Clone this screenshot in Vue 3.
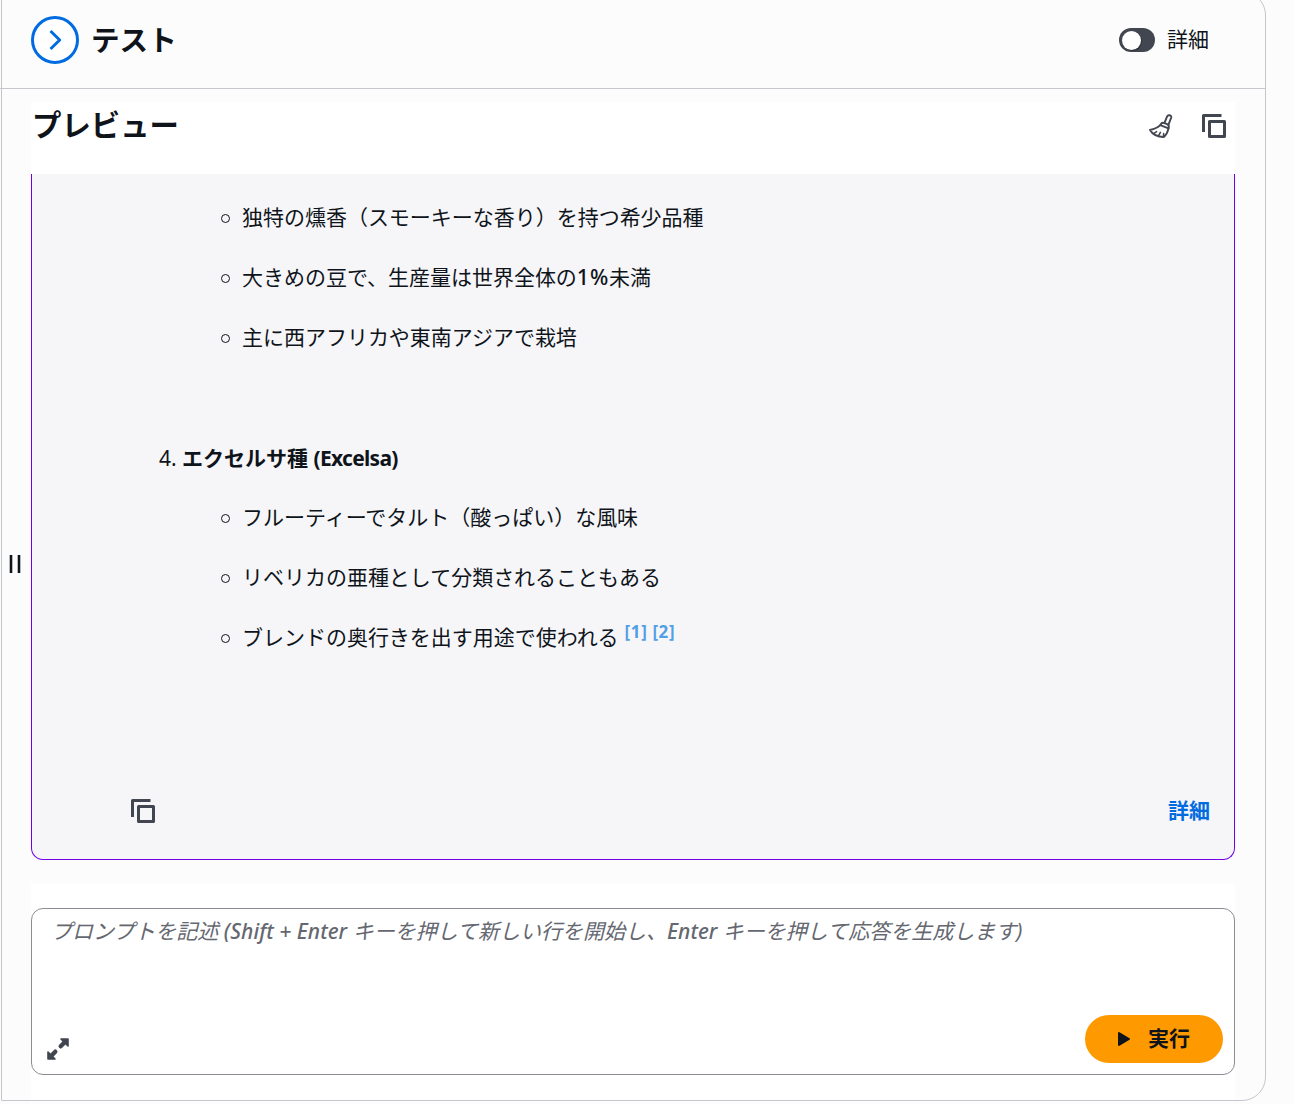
<script setup>
import { ref } from 'vue'

const details = ref(false)

const liberica = [
  ['独特の燻香（スモーキーな香り）を持つ希少品種'],
  ['大きめの豆で、生産量は世界全体の', '1%', '未満'],
  ['主に西アフリカや東南アジアで栽培'],
]

const excelsa = [
  { text: 'フルーティーでタルト（酸っぱい）な風味', refs: [] },
  { text: 'リベリカの亜種として分類されることもある', refs: [] },
  { text: 'ブレンドの奥行きを出す用途で使われる', refs: [1, 2] },
]
</script>

<template>
  <div class="page">
    <section class="panel">
      <header class="panel-header">
        <button class="collapse">
          <svg width="48" height="48" viewBox="0 0 48 48" fill="none" stroke="#006ce0" stroke-width="3">
            <circle cx="24" cy="24" r="22.5" />
            <path d="M19.5 15l9.2 9-9.2 9" stroke-linejoin="round" />
          </svg>
        </button>
        <h2>テスト</h2>
        <label class="toggle" @click="details = !details">
          <span :class="['track', { on: details }]"><span class="knob"></span></span>
          <span class="toggle-label">詳細</span>
        </label>
      </header>

      <div class="panel-body">
        <div class="resize"><i></i><i></i></div>

        <div class="column">
          <div class="preview-header">
            <h3>プレビュー</h3>
            <svg class="broom" width="24" height="24" viewBox="0 0 24 24" fill="none" stroke="#424650" stroke-width="1.9" stroke-linejoin="round" stroke-linecap="round">
              <path d="M15.4 9.2L17.9 2.8C18.9 .3 23 .9 22.1 3.8L19.4 10.8" />
              <path d="M12 9.9C12.8 8.9 14.4 8.6 15.7 9.2L18.5 10.4C20 11.1 20.1 12.6 19.5 14.4L11.2 11.2Z" />
              <path d="M11.2 11.2C8.5 14 5 15.2 1 16C3.2 19.8 8.3 23 14.8 23C17.6 20.7 18.9 17.6 19.5 14.4" />
              <path d="M5 19.3L7.6 17.6M9.6 21.6L11.4 18.4M14.6 22.6V19.6" stroke-width="1.6" />
            </svg>
            <svg class="copy" width="24" height="24" viewBox="0 0 24 24" fill="none" stroke="#424650" stroke-width="3" stroke-linejoin="round">
              <path d="M7.5 7.5h15v15h-15zM1.5 18V1.5H19.5" />
            </svg>
          </div>

          <div class="chat">
            <ul>
              <li v-for="(parts, i) in liberica" :key="i">
                <span v-for="part in parts" :key="part" :class="{ latin: part === '1%' }">{{ part }}</span>
              </li>
            </ul>
            <p class="kind"><span>4.</span> <b>エクセルサ種 <span class="name">(Excelsa)</span></b></p>
            <ul>
              <li v-for="item in excelsa" :key="item.text">
                <span>{{ item.text }}</span>
                <span v-if="item.refs.length" class="refs">
                  <a v-for="n in item.refs" :key="n">[{{ n }}]</a>
                </span>
              </li>
            </ul>
            <div class="chat-footer">
              <svg width="24" height="24" viewBox="0 0 24 24" fill="none" stroke="#424650" stroke-width="3" stroke-linejoin="round">
                <path d="M7.5 7.5h15v15h-15zM1.5 18V1.5H19.5" />
              </svg>
              <a>詳細</a>
            </div>
          </div>

          <div class="prompt-area">
            <div class="prompt">
              <p class="placeholder">プロンプトを記述 <em>(Shift + Enter</em> キーを押して新しい行を開始し、<em>Enter</em> キーを押して応答を生成します)</p>
              <div class="actions">
                <svg width="22" height="22" viewBox="0 0 22 22" fill="#424650" stroke="#424650" stroke-linejoin="round">
                  <path d="M14 1h7v7zM1 14v7h7z" stroke-width="1.6" />
                  <path d="M13.7 8.3l4-4M4.3 17.7l4-4" stroke-width="4.4" stroke-linecap="round" />
                </svg>
                <button class="run">
                  <svg width="14" height="16" viewBox="0 0 14 16" fill="#0f141a" stroke="#0f141a" stroke-width="2" stroke-linejoin="round">
                    <path d="M2 2v12l10-6z" />
                  </svg>
                  <span>実行</span>
                </button>
              </div>
            </div>
          </div>
        </div>
      </div>
    </section>
  </div>
</template>

<style>
body {
  background: #fcfcfd;
}
</style>

<style scoped>
.page {
  width: 1294px;
  height: 1104px;
  overflow: hidden;
  box-sizing: border-box;
  background: #fcfcfd;
  color: #0f141a;
  font-family: "Noto Sans", "Noto Sans CJK JP", sans-serif;
  font-size: 21px;
  line-height: 30px;
}

.page * {
  box-sizing: border-box;
}

h2,
h3,
p,
ul {
  margin: 0;
  padding: 0;
}

svg {
  display: block;
  flex: none;
}

button {
  border: none;
  padding: 0;
  background: none;
  color: inherit;
  font: inherit;
}

.panel {
  width: 1265px;
  height: 1110px;
  margin-top: -9px;
  margin-left: 1px;
  border: 1px solid #c6c6cd;
  border-radius: 0 24px 24px 0;
}

.panel-header {
  display: flex;
  align-items: center;
  height: 97px;
  margin-left: -2px;
  padding: 0 56px 0 31px;
  border-bottom: 1px solid #c6c6cd;
}

.collapse {
  border-radius: 50%;
  background: #fff;
}

h2 {
  margin-left: 12px;
  padding-bottom: 1px;
  font-size: 28.6px;
  line-height: 36px;
}

.toggle {
  display: flex;
  align-items: center;
  gap: 12px;
  margin-left: auto;
}

.toggle-label {
  padding-bottom: 2px;
}

.track {
  width: 36px;
  height: 24px;
  padding: 2.5px;
  border-radius: 12px;
  background: #424650;
}

.track.on {
  padding-left: 14.5px;
  background: #006ce0;
}

.knob {
  display: block;
  width: 19px;
  height: 19px;
  border-radius: 50%;
  background: #fff;
  box-shadow: 1px 1px 0 0 rgba(0, 0, 0, 0.25);
}

.panel-body {
  display: flex;
  height: 1011px;
  padding-top: 13px;
}

.resize {
  display: flex;
  gap: 4px;
  width: 29px;
  padding: 453px 0 0 7px;
}

.resize i {
  width: 4px;
  height: 18px;
  border: solid #b6b9be;
  border-width: 0 1px;
  background: #0f141a;
}

.column {
  width: 1204px;
}

.preview-header {
  display: flex;
  align-items: flex-start;
  height: 72px;
  padding: 12px 9px 0 0;
  background: #fff;
}

h3 {
  flex: 1;
  margin-top: -7px;
  padding-left: 1px;
  font-size: 29.4px;
  line-height: 36px;
}

.copy {
  margin-left: 29px;
}

.chat {
  height: 686px;
  padding-top: 28px;
  border: solid #7300e5;
  border-width: 0 1px 1px;
  border-radius: 0 0 12px 12px;
  background: #f6f6f9;
}

ul {
  display: flex;
  flex-direction: column;
  gap: 30px;
  list-style: none;
}

li {
  display: flex;
  align-items: center;
  height: 30px;
  padding-left: 189px;
  letter-spacing: -0.02px;
}

li::before {
  content: "";
  width: 7px;
  height: 7px;
  margin: 3px 12px 0 0;
  border: 1px solid #0f141a;
  border-radius: 50%;
}

.latin {
  font-weight: 500;
  font-size: 21.5px;
  letter-spacing: 0.8px;
}

.refs {
  display: flex;
  gap: 5px;
  margin: -11px 0 0 6px;
  font-size: 17px;
  font-weight: 700;
  letter-spacing: 0.6px;
  color: #539fe5;
}

.kind {
  margin: 91px 0 29px;
  padding-left: 127px;
}

.name {
  letter-spacing: -0.7px;
}

.chat-footer {
  display: flex;
  align-items: center;
  justify-content: space-between;
  margin-top: 143px;
  padding: 0 24px 0 99px;
}

.chat-footer a {
  padding-bottom: 2px;
  color: #006ce0;
  font-weight: 700;
}

.prompt-area {
  height: 216px;
  margin-top: 24px;
  padding-top: 24px;
  background: #fff;
}

.prompt {
  display: flex;
  flex-direction: column;
  justify-content: space-between;
  height: 167px;
  padding: 7px 11px 11px 19px;
  border: 1px solid #8c8c94;
  border-radius: 12px;
}

.placeholder {
  white-space: nowrap;
  color: #656871;
  font-style: italic;
}

.placeholder em {
  font-weight: 500;
  letter-spacing: 0.05px;
}

.actions {
  display: flex;
  align-items: center;
  justify-content: space-between;
  margin-left: -4px;
}

.actions > svg {
  margin-top: 20px;
}

.run {
  display: flex;
  align-items: center;
  gap: 17px;
  width: 138px;
  height: 48px;
  padding-left: 32px;
  border-radius: 24px;
  background: #ff9900;
  font-weight: 700;
}

.run span {
  padding-bottom: 2px;
}
</style>
